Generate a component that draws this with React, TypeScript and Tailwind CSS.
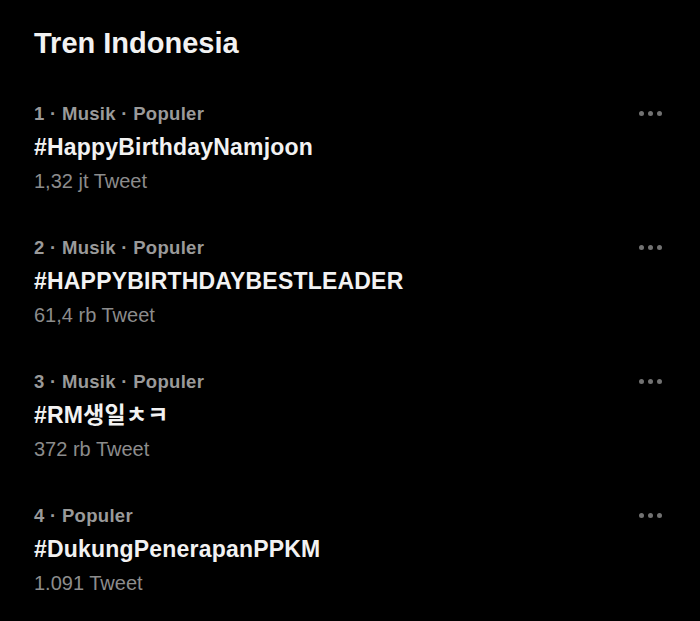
import React from 'react';

interface Trend {
  rank: number;
  category: string;
  name: string;
  count: string;
}

const trends: Trend[] = [
  { rank: 1, category: 'Musik · Populer', name: '#HappyBirthdayNamjoon', count: '1,32 jt Tweet' },
  { rank: 2, category: 'Musik · Populer', name: '#HAPPYBIRTHDAYBESTLEADER', count: '61,4 rb Tweet' },
  { rank: 3, category: 'Musik · Populer', name: '#RM생일ㅊㅋ', count: '372 rb Tweet' },
  { rank: 4, category: 'Populer', name: '#DukungPenerapanPPKM', count: '1.091 Tweet' },
];

const MoreDots: React.FC = () => (
  <div className="flex items-center gap-[4px]">
    <span className="block h-[5px] w-[5px] rounded-full bg-[#727272]" />
    <span className="block h-[5px] w-[5px] rounded-full bg-[#727272]" />
    <span className="block h-[5px] w-[5px] rounded-full bg-[#727272]" />
  </div>
);

const TrendItem: React.FC<{ trend: Trend }> = ({ trend }) => (
  <div className="flex flex-col">
    <div className="flex h-[33px] items-center justify-between">
      <span className="text-[18.5px] font-bold tracking-[0.3px] text-[#9a9a9a]">
        {trend.rank} · {trend.category}
      </span>
      <MoreDots />
    </div>
    <div className="flex h-[34px] items-center text-[23px] font-bold tracking-[0.2px] text-[#f2f2f2]">
      {trend.name}
    </div>
    <div className="flex h-[33px] items-center text-[20px] text-[#8c8c8c]">
      {trend.count}
    </div>
  </div>
);

const App: React.FC = () => {
  return (
    <div
      className="h-[621px] w-[700px] overflow-hidden bg-black pl-[34px] pr-[38px] pt-[26px]"
      style={{ fontFamily: '"Liberation Sans", Arial, "Noto Sans CJK KR", sans-serif' }}
    >
      <h1 className="h-[34px] text-[29px] font-bold leading-[34px] text-[#f2f2f2]">Tren Indonesia</h1>
      <div className="mt-[37px] flex flex-col gap-[34px]">
        {trends.map((t) => (
          <TrendItem key={t.rank} trend={t} />
        ))}
      </div>
    </div>
  );
};

export default App;
